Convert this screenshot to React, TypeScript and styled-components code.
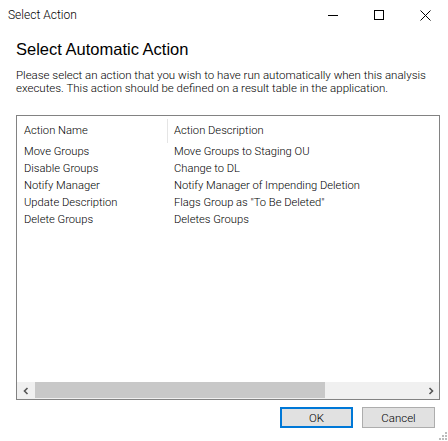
import { Fragment } from "react";
import styled, { createGlobalStyle } from "styled-components";

const GlobalStyle = createGlobalStyle`
  html, body {
    margin: 0;
    padding: 0;
    background: #ffffff;
  }
`;

const smallFont = `"Roboto", "Liberation Sans", Arial, sans-serif`;

// window frame
const Window = styled.div`
  position: relative;
  width: 448px;
  height: 441px;
  background: #ffffff;
  display: flex;
  flex-direction: column;
  overflow: hidden;
  font-family: ${smallFont};
  font-weight: 300;
  color: #000;
`;

const TitleBar = styled.div`
  height: 30px;
  display: flex;
  align-items: center;
  justify-content: space-between;
`;

const TitleText = styled.span`
  padding-left: 8px;
  font-family: "Roboto", "Noto Sans", sans-serif;
  font-weight: 300;
  font-size: 12px;
  color: #000;
`;

const Controls = styled.div`
  display: flex;
  height: 30px;
`;

const ControlButton = styled.div`
  width: 46px;
  height: 30px;
  display: flex;
  align-items: center;
  justify-content: center;
`;

const Body = styled.div`
  display: flex;
  flex-direction: column;
  padding: 0 8px 0 16px;
`;

const Heading = styled.h1`
  margin: 9px 0 0;
  font-family: "Liberation Sans", Arial, sans-serif;
  font-size: 16.5px;
  line-height: 20px;
  font-weight: normal;
  color: #000;
`;

const Description = styled.p`
  margin: 10px 0 0;
  font-size: 11.5px;
  line-height: 13px;
  white-space: nowrap;
`;

// list view
const ListBox = styled.div`
  margin-top: 20px;
  width: 422px;
  height: 283px;
  border: 1px solid #828282;
  display: grid;
  grid-template-rows: 1fr 17px;
`;

const ListArea = styled.div`
  display: flex;
  flex-direction: column;
`;

const Grid = styled.div`
  display: grid;
  grid-template-columns: 150px 1fr;
  font-size: 11.2px;
`;

const HeaderRow = styled(Grid)`
  padding-top: 3px;
`;

const HeaderCell = styled.div<{ $divider?: boolean }>`
  height: 24px;
  box-sizing: border-box;
  padding: 3px 0 0 ${(p) => (p.$divider ? 6 : 7)}px;
  line-height: 17px;
  border-left: ${(p) => (p.$divider ? "1px solid #e5e5e5" : "none")};
  white-space: nowrap;
`;

const Cell = styled.div`
  height: 17px;
  line-height: 17px;
  padding-left: 7px;
  white-space: nowrap;
`;

const ScrollBar = styled.div`
  display: grid;
  grid-template-columns: 17px 1fr 17px;
  height: 17px;
  background: #f0f0f0;
`;

const ArrowButton = styled.div`
  display: flex;
  align-items: center;
  justify-content: center;
`;

const Track = styled.div`
  padding: 0 1px 1px;
`;

const Thumb = styled.div<{ $width: number }>`
  width: ${(p) => p.$width}px;
  height: 16px;
  background-color: #c8c8c8;
`;

const ButtonRow = styled.div`
  display: flex;
  justify-content: flex-end;
  gap: 9px;
  margin-top: 7px;
  padding-right: 5px;
`;

const DialogButton = styled.button<{ $default?: boolean }>`
  width: 73px;
  height: 21px;
  box-sizing: border-box;
  padding: 0;
  background: #e1e1e1;
  border: ${(p) => (p.$default ? "2px solid #0078d7" : "1px solid #adadad")};
  font-family: ${smallFont};
  font-weight: 300;
  font-size: 11.5px;
  color: #000;
`;

const Grip = styled.svg`
  position: absolute;
  right: 1px;
  bottom: 1px;
`;

const actions = [
  ["Move Groups", "Move Groups to Staging OU"],
  ["Disable Groups", "Change to DL"],
  ["Notify Manager", "Notify Manager of Impending Deletion"],
  ["Update Description", 'Flags Group as "To Be Deleted"'],
  ["Delete Groups", "Deletes Groups"],
];

const App = () => {
  return (
    <>
      <GlobalStyle />
      <Window>
        <TitleBar>
          <TitleText>Select Action</TitleText>
          <Controls>
            <ControlButton>
              <svg width="10" height="10" viewBox="0 0 10 10">
                <line x1="0" y1="5.5" x2="10" y2="5.5" stroke="#000" strokeWidth="1" />
              </svg>
            </ControlButton>
            <ControlButton>
              <svg width="10" height="10" viewBox="0 0 10 10">
                <rect x="0.5" y="0.5" width="9" height="9" fill="none" stroke="#000" strokeWidth="1" />
              </svg>
            </ControlButton>
            <ControlButton>
              <svg width="11" height="11" viewBox="0 0 11 11">
                <path d="M0.5 0.5 L10.5 10.5 M10.5 0.5 L0.5 10.5" stroke="#000" strokeWidth="1" />
              </svg>
            </ControlButton>
          </Controls>
        </TitleBar>
        <Body>
          <Heading>Select Automatic Action</Heading>
          <Description>
            Please select an action that you wish to have run automatically when this analysis
            <br />
            executes. This action should be defined on a result table in the application.
          </Description>
          <ListBox>
            <ListArea>
              <HeaderRow>
                <HeaderCell>Action Name</HeaderCell>
                <HeaderCell $divider>Action Description</HeaderCell>
              </HeaderRow>
              <Grid>
                {actions.map(([name, desc]) => (
                  <Fragment key={name}>
                    <Cell>{name}</Cell>
                    <Cell>{desc}</Cell>
                  </Fragment>
                ))}
              </Grid>
            </ListArea>
            <ScrollBar>
              <ArrowButton>
                <svg width="8" height="8" viewBox="0 0 8 8">
                  <path d="M5.5 1 L2.5 4 L5.5 7" fill="none" stroke="#555" strokeWidth="1.6" />
                </svg>
              </ArrowButton>
              <Track>
                <Thumb $width={290} />
              </Track>
              <ArrowButton>
                <svg width="8" height="8" viewBox="0 0 8 8">
                  <path d="M2.5 1 L5.5 4 L2.5 7" fill="none" stroke="#555" strokeWidth="1.6" />
                </svg>
              </ArrowButton>
            </ScrollBar>
          </ListBox>
          <ButtonRow>
            <DialogButton $default>OK</DialogButton>
            <DialogButton>Cancel</DialogButton>
          </ButtonRow>
        </Body>
        <Grip width="8" height="8" viewBox="0 0 8 8">
          <rect x="6" y="0" width="2" height="2" fill="#bcbcbc" />
          <rect x="3" y="3" width="2" height="2" fill="#bcbcbc" />
          <rect x="6" y="3" width="2" height="2" fill="#bcbcbc" />
          <rect x="0" y="6" width="2" height="2" fill="#bcbcbc" />
          <rect x="3" y="6" width="2" height="2" fill="#bcbcbc" />
          <rect x="6" y="6" width="2" height="2" fill="#bcbcbc" />
        </Grip>
      </Window>
    </>
  );
};

export default App;
